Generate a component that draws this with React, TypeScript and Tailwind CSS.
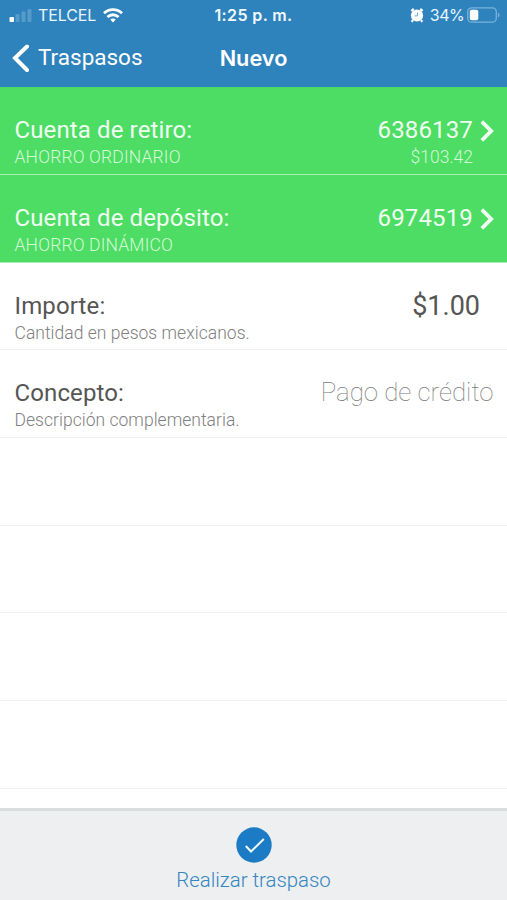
import type { ReactNode } from "react";
import { clsx } from "clsx";

interface RowProps {
  label?: string;
  hint?: string;
  green?: boolean;
  children?: ReactNode;
}

function Row({ label, hint, green, children }: RowProps) {
  return (
    <div
      className={clsx(
        "flex h-[87.7px] shrink-0 justify-between border-b pt-[28px] pl-[14.5px]",
        green ? "border-[#a9efb3] bg-[#4ddc64] text-[#f0fff1]" : "border-[#f2f2f3] bg-white text-[#555]",
      )}
    >
      {label && (
        <div>
          <div className="text-[24px] leading-[30px] tracking-[0.12px]">{label}</div>
          <div
            className={clsx(
              "text-[17.5px] leading-6 font-light",
              green ? "tracking-[0.15px] text-[#d2fbd6]" : "tracking-[0.03px] text-[#808080]",
            )}
          >
            {hint}
          </div>
        </div>
      )}
      {children}
    </div>
  );
}

function Account({ number, balance }: { number: string; balance?: string }) {
  return (
    <div className="flex pr-[13px]">
      <div className="text-right">
        <div className="text-[24px] leading-[30px] tracking-[0.15px]">{number}</div>
        <div className="text-[17.5px] leading-6 font-light text-[#d2fbd6]">{balance}</div>
      </div>
      <svg className="mt-[5px] ml-[7px] h-[22px] w-[14px]" viewBox="0 0 14 22" fill="none" stroke="currentColor" strokeWidth="3.8">
        <path d="M1.8 1.6 11.2 11 1.8 20.4" />
      </svg>
    </div>
  );
}

function StatusBar() {
  return (
    <div className="grid h-[30px] grid-cols-3 items-center font-['Inter',sans-serif] text-[16px] leading-5">
      <div className="flex items-center pl-[9px]">
        <svg className="h-[15px] w-[24px]" viewBox="0 0 24 15" fill="#fff">
          <rect x="0.5" y="9" width="4.5" height="5" rx="1" />
          <rect x="6.5" y="6" width="4" height="8" rx="1" opacity=".2" />
          <rect x="12.5" y="3.5" width="4" height="10.5" rx="1" opacity=".2" />
          <rect x="18.5" y="1" width="4" height="13" rx="1" opacity=".2" />
        </svg>
        <span className="ml-[5px] tracking-[-0.1px] text-[#e6f5ff]">TELCEL</span>
        <svg className="ml-[7px] h-[15px] w-[20px]" viewBox="0 0 20 15" fill="none" stroke="#fff" strokeWidth="2.8">
          <path d="M1 5.3C6 .5 14 .5 19 5.3" />
          <path d="M4.4 9C7.6 6 12.4 6 15.6 9" />
          <path d="M7.2 11.6c1.6-1.5 4-1.5 5.6 0L10 14.5z" fill="#fff" stroke="none" />
        </svg>
      </div>
      <div className="text-center font-semibold tracking-[0.4px] text-[#f0faff]">1:25 p. m.</div>
      <div className="flex items-center justify-end pr-[7px]">
        <svg className="h-[15px] w-[14px]" viewBox="0 0 14 15">
          <path d="M1.3 2.8 3.8 1M12.7 2.8 10.2 1M3 12l-1.3 1.8M11 12l1.3 1.8" stroke="#fff" strokeWidth="2.2" />
          <circle cx="7" cy="7.5" r="6.1" fill="#fff" />
          <path d="M7.4 4.5v3.4H4.6" fill="none" stroke="#6faad6" strokeWidth="1" />
        </svg>
        <span className="ml-[6px] tracking-[-0.6px] text-[#e6f5ff]">34%</span>
        <svg className="ml-[3px] h-[16px] w-[33px]" viewBox="0 0 33 16">
          <rect x="0.7" y="0.8" width="28.6" height="14.4" rx="4" fill="none" stroke="#7ab2dc" strokeWidth="1.3" />
          <rect x="2.8" y="2.8" width="8.5" height="10.4" rx="1.8" fill="#fff" />
          <path d="M31 5.5c2 .7 2 4.3 0 5z" fill="#7ab2dc" />
        </svg>
      </div>
    </div>
  );
}

export default function App() {
  return (
    <div className="flex h-[900px] w-[507px] flex-col overflow-hidden bg-white font-['Roboto',sans-serif]">
      <header className="h-[87.3px] shrink-0 bg-[#2e83bd] text-white">
        <StatusBar />
        <div className="grid h-[56px] grid-cols-3 items-center">
          <div className="flex items-center pl-[12px]">
            <svg className="h-[29px] w-[18px]" viewBox="0 0 18 29" fill="none" stroke="currentColor" strokeWidth="4" strokeLinecap="round">
              <path d="M15 2.5 3 14l12 12" />
            </svg>
            <span className="ml-[8px] text-[22.5px]">Traspasos</span>
          </div>
          <h1 className="text-center font-['Inter',sans-serif] text-[21.7px] font-semibold">Nuevo</h1>
        </div>
      </header>

      <main className="flex h-[720.7px] shrink-0 flex-col overflow-hidden">
        <Row green label="Cuenta de retiro:" hint="AHORRO ORDINARIO">
          <Account number="6386137" balance="$103.42" />
        </Row>
        <Row green label="Cuenta de depósito:" hint="AHORRO DINÁMICO">
          <Account number="6974519" />
        </Row>
        <Row label="Importe:" hint="Cantidad en pesos mexicanos.">
          <div className="pr-[27px] text-[27px] leading-[31px]">$1.00</div>
        </Row>
        <Row label="Concepto:" hint="Descripción complementaria.">
          <div className="pr-[13.5px] text-[25.8px] leading-[29px] font-thin text-[#777]">Pago de crédito</div>
        </Row>
        <Row />
        <Row />
        <Row />
        <Row />
      </main>

      <footer className="flex flex-1 flex-col items-center border-t-[3px] border-[#d9dddd] bg-[#edeff1] pt-[16px]">
        <svg className="h-[36px] w-[36px]" viewBox="0 0 36 36" fill="none">
          <circle cx="18" cy="18" r="17.7" fill="#1b7cc5" />
          <path d="m9.8 19 5.2 5.5L27.8 12" stroke="#eef8ff" strokeWidth="2" />
        </svg>
        <span className="mt-[4px] text-[20.4px] leading-[26px] font-light text-[#3585c0]">Realizar traspaso</span>
      </footer>
    </div>
  );
}
